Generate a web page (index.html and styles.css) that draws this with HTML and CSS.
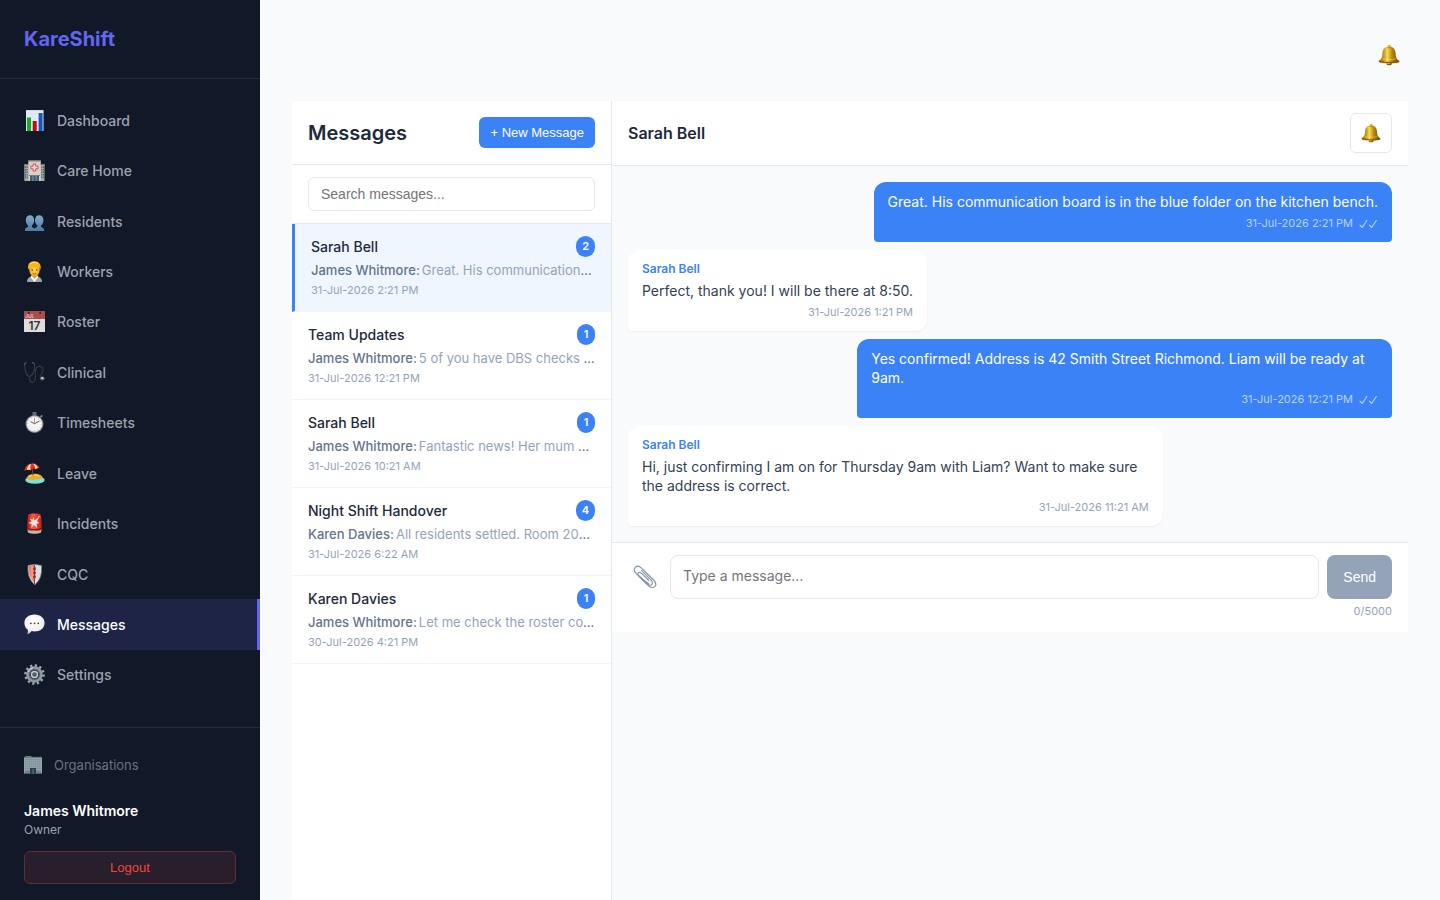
FILE: index.html
```html
<!DOCTYPE html>
<html lang="en">
<head>
<meta charset="utf-8">
<title>KareShift – Messages</title>
<link rel="stylesheet" href="styles.css">
</head>
<body>
<svg class="defs" aria-hidden="true">
  <defs>
    <linearGradient id="gold" x1="0" x2="1" y1="0" y2="0"><stop offset="0" stop-color="#8f6408"/><stop offset=".25" stop-color="#c79a16"/><stop offset=".42" stop-color="#f7dc50"/><stop offset=".65" stop-color="#b9840e"/><stop offset="1" stop-color="#6d4405"/></linearGradient>
    <linearGradient id="people" x1="0" x2="0" y1="0" y2="1"><stop offset="0" stop-color="#83aacc"/><stop offset="1" stop-color="#4e7aa3"/></linearGradient>
    <radialGradient id="bubble" cx=".45" cy=".35" r=".65"><stop offset="0" stop-color="#fff"/><stop offset=".75" stop-color="#f0f0f0"/><stop offset="1" stop-color="#bdbdbd"/></radialGradient>
    <linearGradient id="siren" x1="0" x2="1" y1="0" y2="0"><stop offset="0" stop-color="#b3160d"/><stop offset=".4" stop-color="#ff5a48"/><stop offset="1" stop-color="#bd1a10"/></linearGradient>
    <radialGradient id="face" cx=".5" cy=".5" r=".6"><stop offset="0" stop-color="#ffd84a"/><stop offset="1" stop-color="#eda011"/></radialGradient>
    <symbol id="bell" viewBox="0 0 24 24">
      <ellipse cx="12.2" cy="21.2" rx="3" ry="2" fill="#805006"/><ellipse cx="11.6" cy="21" rx="1.4" ry="1.2" fill="#d3a020"/>
      <path d="M12 .9c1.3 0 2.1.8 2 2 3.2.8 4.9 3.2 5.1 6.3.2 5 1 7.200 4 9.200.9 1-.3 1.800-1.500 2-5.800 1.100-13.400 1.100-19.200 0-1.200-.2-2.400-1-1.500-2 3-2 3.800-4.200 4-9.200.2-3.100 1.900-5.500 5.100-6.300-.1-1.200.7-2 2-2z" fill="url(#gold)"/>
      <path d="M1.400 18.800c5 1.900 16.200 1.900 21.200 0" fill="none" stroke="#865305" stroke-width="1.200"/><path d="M4.500 16c4 1.500 11 1.500 15 0" fill="none" stroke="#fff09a" stroke-opacity=".6" stroke-width=".7"/><path d="M9.800 4.200h4.600" stroke="#8b5b08" stroke-width=".6"/>
    </symbol>
    <symbol id="chart" viewBox="0 0 21 21"><path d="M2 0h17.500v21H2z" fill="#e4eaf3"/><path d="M2 4h17M2 8h17M2 12h17M2 16h17" stroke="#cfd8e6" stroke-width=".5"/><path d="M3 7.500h4V21H3z" fill="#12b021"/><path d="M8.700 11h4v10h-4z" fill="#c20b12"/><path d="M14.600 3h4v18h-4z" fill="#1457c4"/><path d="M2 .3h17.500" stroke="#b9c5d4" stroke-width=".6"/></symbol>
    <symbol id="hospital" viewBox="0 0 21 21"><path d="M.3 4.500h4.500V21H.3zM16 4.500h4.500V21H16z" fill="#a9a59c"/><path d="M4.300.5h12.500V21H4.300z" fill="#d4d0ca"/><path d="M4 0h13v1.500H4zM0 4h4.400v1H0zM16.500 4H21v1h-4.500z" fill="#7c766d"/><path d="M1.500 6.500v12M3.200 6.500v12M17.800 6.500v12M19.500 6.500v12" stroke="#456573" stroke-width="1" stroke-dasharray="1.500 1"/><path d="M6 16h9v5H6z" fill="#3e6073"/><path d="M8.900 16v5M12.100 16v5" stroke="#9eaaab" stroke-width=".7"/><path d="M5 15.500h11" stroke="#807c74"/><path d="M9.100 4h2.600v2.200H14v2.600h-2.300V11H9.100V8.800H6.800V6.200h2.300z" fill="#f5dcdc" stroke="#df4850"/></symbol>
    <symbol id="users" viewBox="0 0 21 21"><path id="person" d="M1 20v-1.200c0-1.300 1-2.100 2.900-2.700l.3-1.600C2.500 13.200 1.700 11 1.800 8.900 2 6 3.600 4.300 6 4.300s4.100 1.800 4.200 4.600c.1 2.200-.7 4.300-2.400 5.600l.3 1.700c1.800.5 2.800 1.300 2.800 2.600V20z" fill="url(#people)"/><use href="#person" x="9.200"/></symbol>
    <symbol id="worker" viewBox="0 0 21 21"><path d="M3 21c.1-4 2.600-5.700 7.500-5.700S18 17 18 21z" fill="#a0a2a8"/><path d="M6.500 16l4 5 4-5-1.500-2H8z" fill="#fff"/><path d="M8.300 12h4.400v3.600l-2.200 2-2.200-2z" fill="#d99018"/><path d="M10.500 2.500c3.600 0 5.500 2.200 5.300 5.800-.2 4.400-2.400 7.200-5.300 7.200s-5.100-2.800-5.300-7.200c-.2-3.600 1.700-5.800 5.300-5.800z" fill="url(#face)"/><path d="M4.300 8.500C3.200 3 6 .3 10 .2c4.600-.2 7.700 2.700 6.500 8.500l-1-2.300c-3 .3-5.800-.3-7.500-1.700-.5 1.500-2.300 1.600-2.500 2.300z" fill="#f4b519"/><path d="M6 3c2-2 6-2 8-.5" stroke="#ffe16d" fill="none"/><circle cx="8.200" cy="9" r=".7" fill="#553510"/><circle cx="12.800" cy="9" r=".7" fill="#553510"/><path d="M8.800 12.600q1.700 1 3.400 0" stroke="#a5420c" fill="none" stroke-width=".8"/></symbol>
    <symbol id="calendar" viewBox="0 0 21 21"><path d="M0 0h21v21H0z" fill="#dedddb"/><path d="M0 0h21v8H0z" fill="#aa4e4a"/><circle cx="4.800" cy="2" r="1" fill="#3b2222"/><circle cx="16.200" cy="2" r="1" fill="#3b2222"/><path d="M4.800 0v2M16.200 0v2" stroke="#4d3838" stroke-width=".7"/><text x="1" y="7" class="cal-month">JUL</text><text x="10.500" y="18.500" class="cal-day">17</text></symbol>
    <symbol id="stetho" viewBox="0 0 21 21"><path d="M2.500.7C.8.500.5 1.500.6 3c.2 5 1.800 11.300 4.800 11.500C8.500 14.500 10.800 8.500 10.600 3 10.500 1.200 9.500.5 8 .8M5.500 14.500c-.2 4 1.200 6.200 3.200 5.900 3.500-.6 2.800-5.400 2.600-9-.3-4.800 1.600-7.600 4.400-7.300 3.700.4 4 4.500 2.300 6.900-1.800 2.600-2.400 3.500-.8 4.900" fill="none" stroke="#363b43" stroke-width="1.200"/><path d="M2.400.7C.9.600.6 1.600.7 3M8 .8c1.500-.3 2.300.4 2.500 1.700" stroke="#59616c" fill="none"/><ellipse cx="18.300" cy="16.500" rx="2.400" ry="2" fill="#69645f"/><circle cx="18.300" cy="16" r="1" fill="#e8e4dd"/></symbol>
    <symbol id="watch" viewBox="0 0 21 21"><path d="M8.500 0h4v3.500h-4z" fill="#606b76"/><path d="M16 5l2.500-1.500" stroke="#6f7d89" stroke-width="2"/><circle cx="10.500" cy="12" r="9" fill="#7f8b96"/><circle cx="10.500" cy="12" r="7.800" fill="#f3f3f1"/><circle cx="10.500" cy="12" r="6.600" fill="none" stroke="#777" stroke-width="1" stroke-dasharray=".5 2.960"/><path d="M6.600 9.700l3.900 2 5-2.700" stroke="#474b4e" stroke-width=".9" fill="none"/><path d="M10.500 6v6" stroke="#cf6657" stroke-width=".7"/></symbol>
    <symbol id="beach" viewBox="0 0 21 21"><ellipse cx="11" cy="17" rx="9.700" ry="3.800" fill="#78e1e4"/><path d="M2.400 15c1.600-3 5-4.200 8.600-4.200 4.200 0 7.300 1.700 7.700 4-3 2.300-5 .8-7.800 1.700-3.200 1-6.400.4-8.500-1.500z" fill="#f0a72a"/><path d="M4.500 13.500c3-2 8-2 11 0" stroke="#ffd665" stroke-width="1.200" fill="none"/><path d="M8 4l1 8.500" stroke="#75451c" stroke-width="1"/><g transform="rotate(-8 8 4)"><path d="M.2 7C.6 2.500 4.300.3 8.300.6c3.900.2 6.700 2.600 7.200 6-1.400-1-3-.9-4.400 0-1.800-.9-3.600-.8-5 .3-1.700-.9-4-.9-5.900.1z" fill="#e52d20"/><path d="M7.600.6C4.700 1.300 3 3.300 2.800 6.300c1.300-.2 2.300 0 3.300.6.100-2.800.4-4.900 1.500-6.300zM9 .6c1.600 1.500 2.200 3.500 2.100 6 1-.6 1.700-.7 2.600-.6C13.200 3.200 11.500 1.200 9 .6z" fill="#fff0a9"/></g></symbol>
    <symbol id="alarm" viewBox="0 0 21 21"><path d="M3.300 16h14.400l-.7 3.500c-2.500 1.800-10.500 1.800-13 0z" fill="#b8b8b5"/><path d="M4.300 1.500C6 .1 15 .1 16.700 1.500c.8 4 1.200 10 1 15.200-2.500 1.800-11.900 1.800-14.400 0-.2-5.200.2-11.200 1-15.200z" fill="url(#siren)"/><path d="M9.500 4l1 3.500 4.800-4-2.200 5 2.400 1.500-3 .7.700 4.200-3.200-3-2.800 3 .6-4-3.500-1 3.300-1.300-2-3.400 3.200 1.600z" fill="#ffe3df"/><path d="M14 3.500c1-.7 2 0 2.200 1.200" stroke="#ffb6ae" fill="none"/><path d="M3.300 15.300c3 1.800 11.400 1.800 14.400 0" stroke="#861008" fill="none"/></symbol>
    <symbol id="shield" viewBox="0 0 21 21"><path d="M10.800.3L17.500 1.500c.4 8.500-.7 14-6.700 19.200C4.800 15.500 3.700 10 4.100 1.500z" fill="#dbe0e1" stroke="#747b80" stroke-width=".8"/><path d="M10.500 1L5 2c-.2 7.200.7 12 5.500 16.800z" fill="#ed7a67"/><path d="M8 2.500v13" stroke="#f3a190" stroke-width="1.500"/><path d="M10.500 1v19" stroke="#864b43" stroke-width="1"/><path d="M11.200 3.500l-2 1.500 2 1zM11.200 7.500l-2 1.500 2 1zM11.200 11.500l-2 1.500 2 1z" fill="#8d2e28" stroke="#8d2e28"/></symbol>
    <symbol id="speech" viewBox="0 0 21 21"><path d="M10.500.4c5.900 0 10.100 3.500 10.100 8.500s-4.200 8.500-10.100 8.500c-1 0-2-.1-2.900-.3-1.200 1.700-2.800 3-4.800 3.200.9-1 1.300-2.600 1-4.600C1.600 14.200.4 11.800.4 8.900.4 3.900 4.600.4 10.500.4z" fill="url(#bubble)"/><circle cx="6.800" cy="9.300" r=".9" fill="#454545"/><circle cx="10.500" cy="9.300" r=".9" fill="#454545"/><circle cx="14.200" cy="9.300" r=".9" fill="#454545"/></symbol>
    <symbol id="gear" viewBox="0 0 21 21"><circle cx="10.500" cy="10.500" r="9" fill="none" stroke="#9eabb4" stroke-width="2.600" stroke-dasharray="2.200 2.512"/><circle cx="10.500" cy="10.500" r="6.500" fill="none" stroke="#8e9aa3" stroke-width="3.600"/><circle cx="10.500" cy="10.500" r="5" fill="none" stroke="#57626b" stroke-width="1.400"/><circle cx="10.500" cy="10.500" r="3" fill="#4e5b66" stroke="#c6d0d5" stroke-width="1.400"/><path d="M4.200 8a7 7 0 0 1 5-4.300" stroke="#d3dbdf" fill="none"/></symbol>
    <symbol id="office" viewBox="0 0 18 18"><path d="M0 1h18v16.500H0z" fill="#bcc6c8"/><path d="M1.500 0h6v1h-6z" fill="#9a9d96"/><path d="M0 1.300h18" stroke="#7b8281"/><path d="M1 3.500h16M1 5.700h16M1 7.900h16M1 10.100h16M1 12.300h16" stroke="#8dabbd" stroke-width="1.300" stroke-dasharray="1.500 .5"/><path d="M1 14.500h5V17H1zM12 14.500h5V17h-5z" fill="#8aa2a8"/><path d="M6 12h6v5.500H6z" fill="#2e4b53"/><path d="M9 13v4.500" stroke="#849494"/></symbol>
    <symbol id="clip" viewBox="0 0 24 24"><path d="M8.200 5.200l9 9c2 2.100 2.600 4.300 1.500 5.400-1.200 1.200-3.400.5-5.500-1.500L4.700 9.600" fill="none" stroke="#8393a5" stroke-width="1.100"/><path d="M16 19.300L3.500 8.900C1.200 6.500.8 3.800 2.300 2.300s4.100-1.100 6.200.8l11.700 11.400c2.600 2.700 3.100 5.600 1.600 7.100s-4.400 1.100-7-1.500L6.200 11.500C4.700 10 4.500 8.600 5.300 7.800s2.200-.5 3.600.9l7.200 7.100" fill="none" stroke="#8595a8" stroke-width="1.200"/></symbol>
    <symbol id="ticks" viewBox="0 0 19 10"><path d="M1 6.200l2.200 2.300L7.800 1.500M10.500 6.200l2.200 2.300 4.600-7" fill="none" stroke="currentColor" stroke-width="1.100" stroke-linecap="round" stroke-linejoin="round"/></symbol>
  </defs>
</svg>
<div class="app">
  <aside class="sidebar">
    <div class="brand">KareShift</div>
    <nav class="nav">
      <a href="#"><svg class="icon"><use href="#chart"/></svg>Dashboard</a>
      <a href="#"><svg class="icon"><use href="#hospital"/></svg>Care Home</a>
      <a href="#"><svg class="icon"><use href="#users"/></svg>Residents</a>
      <a href="#"><svg class="icon"><use href="#worker"/></svg>Workers</a>
      <a href="#"><svg class="icon"><use href="#calendar"/></svg>Roster</a>
      <a href="#"><svg class="icon"><use href="#stetho"/></svg>Clinical</a>
      <a href="#"><svg class="icon"><use href="#watch"/></svg>Timesheets</a>
      <a href="#"><svg class="icon"><use href="#beach"/></svg>Leave</a>
      <a href="#"><svg class="icon"><use href="#alarm"/></svg>Incidents</a>
      <a href="#"><svg class="icon"><use href="#shield"/></svg>CQC</a>
      <a href="#" class="active" aria-current="page"><svg class="icon"><use href="#speech"/></svg>Messages</a>
      <a href="#"><svg class="icon"><use href="#gear"/></svg>Settings</a>
    </nav>
    <div class="account">
      <a href="#" class="org"><svg class="icon-org"><use href="#office"/></svg>Organisations</a>
      <div class="user-name">James Whitmore</div>
      <div class="user-role">Owner</div>
      <button type="button" class="logout">Logout</button>
    </div>
  </aside>
  <main class="main">
    <header class="topbar">
      <button type="button" class="notify" aria-label="Notifications"><svg><use href="#bell"/></svg></button>
    </header>
    <div class="messenger">
      <section class="threads">
        <div class="threads-head">
          <h1>Messages</h1>
          <button type="button" class="new-message">+ New Message</button>
        </div>
        <div class="search"><input type="search" aria-label="Search messages" placeholder="Search messages..."></div>
        <article class="thread selected">
          <div class="thread-top"><h2>Sarah Bell</h2><span class="badge">2</span></div>
          <p class="preview"><b>James Whitmore:</b><span>Great. His communication board is in the blue folder</span></p>
          <time>31-Jul-2026 2:21 PM</time>
        </article>
        <article class="thread">
          <div class="thread-top"><h2>Team Updates</h2><span class="badge">1</span></div>
          <p class="preview"><b>James Whitmore:</b><span>5 of you have DBS checks expiring soon</span></p>
          <time>31-Jul-2026 12:21 PM</time>
        </article>
        <article class="thread">
          <div class="thread-top"><h2>Sarah Bell</h2><span class="badge">1</span></div>
          <p class="preview"><b>James Whitmore:</b><span>Fantastic news! Her mum will be pleased</span></p>
          <time>31-Jul-2026 10:21 AM</time>
        </article>
        <article class="thread">
          <div class="thread-top"><h2>Night Shift Handover</h2><span class="badge">4</span></div>
          <p class="preview"><b>Karen Davies:</b><span>All residents settled. Room 204 checked</span></p>
          <time>31-Jul-2026 6:22 AM</time>
        </article>
        <article class="thread">
          <div class="thread-top"><h2>Karen Davies</h2><span class="badge">1</span></div>
          <p class="preview"><b>James Whitmore:</b><span>Let me check the roster coverage</span></p>
          <time>30-Jul-2026 4:21 PM</time>
        </article>
      </section>
      <section class="chat">
        <div class="chat-head">
          <h2>Sarah Bell</h2>
          <button type="button" class="mute" aria-label="Mute conversation"><svg><use href="#bell"/></svg></button>
        </div>
        <div class="log">
          <div class="msg own"><p>Great. His communication board is in the blue folder on the kitchen bench.</p><div class="meta"><time>31-Jul-2026 2:21 PM</time><svg class="ticks" role="img" aria-label="Read"><use href="#ticks"/></svg></div></div>
          <div class="msg"><div class="sender">Sarah Bell</div><p>Perfect, thank you! I will be there at 8:50.</p><div class="meta"><time>31-Jul-2026 1:21 PM</time></div></div>
          <div class="msg own"><p>Yes confirmed! Address is 42 Smith Street Richmond. Liam will be ready at 9am.</p><div class="meta"><time>31-Jul-2026 12:21 PM</time><svg class="ticks" role="img" aria-label="Read"><use href="#ticks"/></svg></div></div>
          <div class="msg"><div class="sender">Sarah Bell</div><p>Hi, just confirming I am on for Thursday 9am with Liam? Want to make sure the address is correct.</p><div class="meta"><time>31-Jul-2026 11:21 AM</time></div></div>
        </div>
        <form class="composer">
          <div class="compose-row">
            <button type="button" class="attach" aria-label="Attach file"><svg><use href="#clip"/></svg></button>
            <textarea rows="1" aria-label="Message" placeholder="Type a message..."></textarea>
            <button type="button" class="send">Send</button>
          </div>
          <div class="counter">0/5000</div>
        </form>
      </section>
    </div>
  </main>
</div>
</body>
</html>
```
FILE: styles.css
```css
* { box-sizing: border-box; margin: 0; padding: 0; }
body { font-family: Inter, "Liberation Sans", sans-serif; background: #f8fafc; color: #1e293b; }
button, input { font-family: "Liberation Sans", Arial, sans-serif; }
button { cursor: pointer; }
a { text-decoration: none; }
svg { display: block; flex: none; }
.defs { position: absolute; width: 0; height: 0; }
.cal-month { font: 600 5px Inter, sans-serif; fill: #e7c6c3; }
.cal-day { font: 600 12px Inter, sans-serif; fill: #343434; text-anchor: middle; }

.app { display: flex; min-height: 100vh; }

.sidebar { width: 260px; flex: none; background: #111827; display: flex; flex-direction: column; }
.brand { padding: 24px; line-height: 30px; font-size: 20px; font-weight: 700; color: #6366f1; border-bottom: 1px solid #272e3b; }
.nav { flex: 1; display: flex; flex-direction: column; padding: 16px 0 27px; }
.nav a { flex: 1; display: flex; align-items: center; gap: 12px; padding: 0 24px; min-height: 44px; font-size: 14px; font-weight: 500; color: #9ca3af; border-right: 3px solid transparent; }
.nav a.active { background: #1d2445; color: #fff; border-right-color: #6366f1; }
.icon { width: 21px; height: 21px; }
.account { border-top: 1px solid #272e3b; padding: 16px 24px; }
.org { display: flex; align-items: center; gap: 12px; height: 42px; font-size: 13px; color: #6b7280; }
.icon-org { width: 18px; height: 18px; opacity: .8; }
.user-name { margin-top: 16px; line-height: 18px; font-size: 14px; font-weight: 600; color: #fff; }
.user-role { line-height: 19px; font-size: 12px; color: #9ca3af; }
.logout { display: block; width: 100%; height: 33px; margin-top: 12px; font-size: 13px; color: #ef4444; background: #291e2b; border: 1px solid #6c2934; border-radius: 6px; }

.main { flex: 1; min-width: 0; display: flex; flex-direction: column; padding: 32px 32px 0; }
.topbar { display: flex; justify-content: flex-end; align-items: center; height: 45px; margin-bottom: 24px; }
.notify { padding: 8px; background: none; border: 0; }
.notify svg { width: 22px; height: 22px; }

.messenger { flex: 1; display: grid; grid-template-columns: 320px minmax(0, 1fr); }
.threads { background: #fff; border-right: 1px solid #e2e8f0; }
.threads-head { display: flex; justify-content: space-between; align-items: center; padding: 16px; border-bottom: 1px solid #e2e8f0; }
h1 { font-size: 20px; font-weight: 600; }
.new-message { height: 31px; padding: 0 11px; font-size: 13px; color: #fff; background: #3b82f6; border: 0; border-radius: 6px; }
.search { padding: 12px 16px; border-bottom: 1px solid #e2e8f0; }
.search input { display: block; width: 100%; height: 34px; padding: 0 12px; font-size: 14px; border: 1px solid #e2e8f0; border-radius: 6px; appearance: none; }
.search input::placeholder, textarea::placeholder { color: #757575; }
.thread { padding: 12px 16px; border-bottom: 1px solid #f1f5f9; }
.thread.selected { background: #eff6ff; border-left: 3px solid #3b82f6; }
.thread-top { display: flex; justify-content: space-between; align-items: center; height: 21px; margin-bottom: 4px; }
.thread h2 { font-size: 14px; font-weight: 500; }
.badge { min-width: 18px; padding: 0 6px; line-height: 21px; font-size: 11px; font-weight: 600; text-align: center; color: #fff; background: #3b82f6; border-radius: 10px; }
.preview { margin-bottom: 2px; line-height: 19px; font-size: 13px; color: #64748b; white-space: nowrap; overflow: hidden; text-overflow: ellipsis; }
.preview b { margin-right: 2px; font-weight: 500; }
.preview span { color: #94a3b8; }
.thread time { display: block; line-height: 17px; font-size: 11px; color: #94a3b8; }

.chat-head { display: flex; justify-content: space-between; align-items: center; padding: 12px 16px; background: #fff; border-bottom: 1px solid #e2e8f0; }
.chat-head h2 { font-size: 16px; font-weight: 600; }
.mute { padding: 9px 10px; background: #fff; border: 1px solid #e2e8f0; border-radius: 6px; }
.mute svg { width: 20px; height: 20px; }
.log { display: flex; flex-direction: column; align-items: flex-start; gap: 8px; padding: 16px; }
.msg { max-width: 70%; padding: 10px 14px; color: #334155; background: #fff; border-radius: 12px 12px 12px 4px; box-shadow: 0 1px 2px #0000000d; }
.msg.own { align-self: flex-end; background: #3b82f6; color: #fff; border-radius: 12px 12px 4px 4px; box-shadow: none; }
.sender { margin-bottom: 3px; line-height: 18px; font-size: 12px; font-weight: 600; color: #3b82f6; }
.msg p { font-size: 14px; line-height: 19px; }
.meta { display: flex; justify-content: flex-end; align-items: center; gap: 6px; margin-top: 4px; line-height: 17px; font-size: 11px; color: #94a3b8; }
.own .meta { color: #b9d3fc; }
.ticks { width: 19px; height: 10px; }

.composer { padding: 12px 16px; background: #fff; border-top: 1px solid #e2e8f0; }
.compose-row { display: flex; gap: 8px; }
.attach { padding: 0 5px; background: none; border: 0; }
.attach svg { width: 24px; height: 24px; }
textarea { flex: 1; min-width: 0; height: 44px; padding: 10px 12px; font: 14px/20px Inter, sans-serif; border: 1px solid #e2e8f0; border-radius: 8px; resize: none; }
.send { padding: 0 16px; font-size: 14px; color: #fff; background: #94a3b8; border: 0; border-radius: 8px; }
.counter { margin-top: 4px; line-height: 17px; font-size: 11px; color: #94a3b8; text-align: right; }
```
